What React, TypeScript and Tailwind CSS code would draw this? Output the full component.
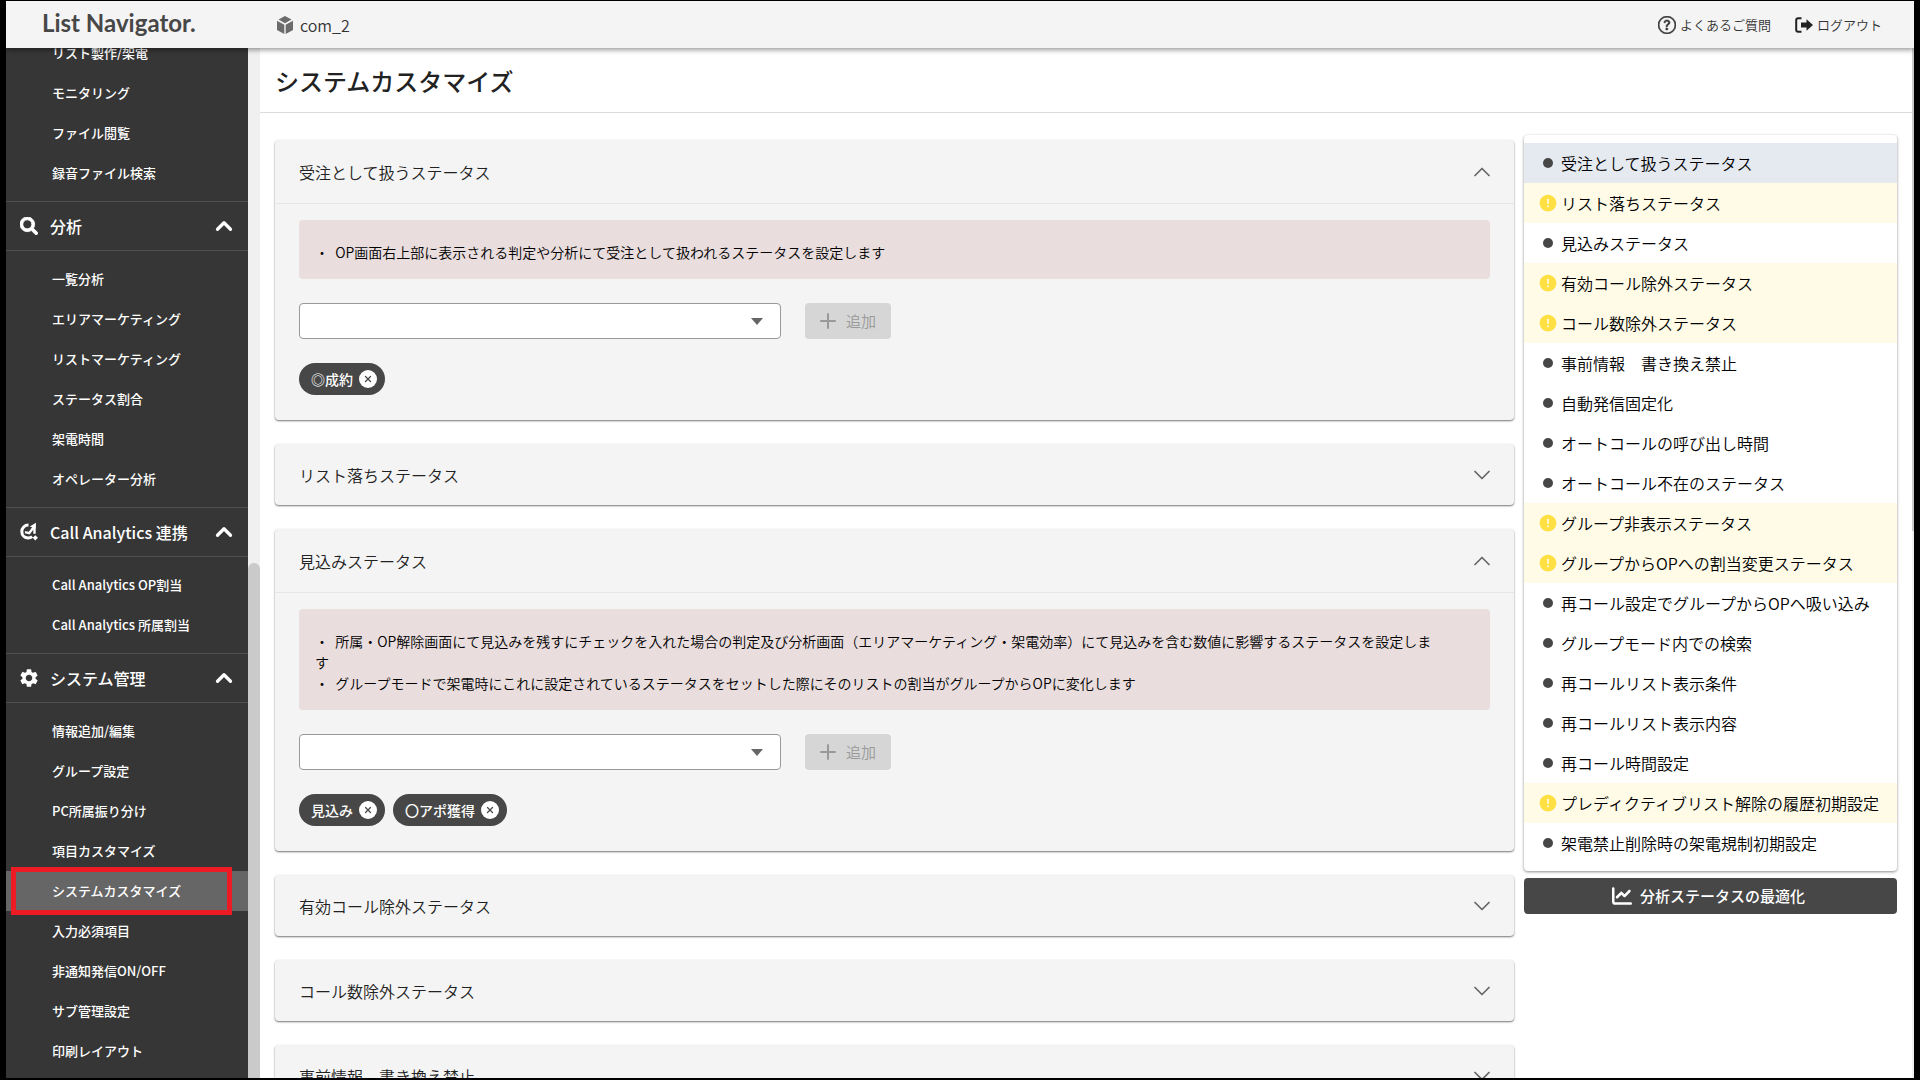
import { useState } from "react";
import clsx from "clsx";
import { FaSearch } from "react-icons/fa";
import { FaChartLine } from "react-icons/fa6";
import { BsQuestionCircle } from "react-icons/bs";
import { MdSettings, MdError } from "react-icons/md";
import { ChevronDown, ChevronUp, Plus, X } from "lucide-react";
import type { ReactNode } from "react";

type MenuSection = {
  readonly title?: string;
  readonly icon?: ReactNode;
  readonly items: readonly string[];
};

type Panel = {
  readonly title: string;
  readonly notes?: readonly ReactNode[];
  readonly tags?: readonly string[];
};

type IndexEntry = {
  readonly label: string;
  readonly warn?: boolean;
};

function CallAnalyticsIcon() {
  return (
    <svg viewBox="0 0 18 18" className="size-[18px]" fill="none" aria-hidden="true">
      <path
        d="M8.500 2C4.500 2 1.800 5 1.800 8.600c0 3.800 2.800 6.400 6.400 6.400 1.600 0 2.900-.4 4-1.300"
        stroke="currentColor"
        strokeWidth="3"
      />
      <path d="M5 9.200l4.200 1L14.500 3v7.800" stroke="currentColor" strokeWidth="2.400" />
      <path d="M9.800 3.600L15.700 0v5.500z" fill="currentColor" />
      <path d="M15.300 12.200l2.600 2.600-2.600 2.600-2.600-2.600z" fill="currentColor" />
    </svg>
  );
}

function CubeIcon() {
  return (
    <svg viewBox="0 0 18 18" className="size-[18px] text-[#6b6b6b]" fill="currentColor" aria-hidden="true">
      <path d="M9 0l6.500 3.500L9 7.200 2.500 3.500z" />
      <path d="M1 4.800l7.300 4V18L1 14z" />
      <path d="M17 4.800l-7.300 4V18L17 14z" />
    </svg>
  );
}

function LogoutIcon() {
  return (
    <svg viewBox="0 0 18 16" className="h-4 w-[18px] text-[#222]" aria-hidden="true">
      <path d="M6.500 1.200H3.200Q1.200 1.200 1.200 3.200v9.600q0 2 2 2h3.300" fill="none" stroke="currentColor" strokeWidth="2" />
      <path d="M6 5.500h5.500V2.300L18 8l-6.500 5.700v-3.200H6z" fill="currentColor" />
    </svg>
  );
}

const MENU: readonly MenuSection[] = [
  { items: ["リスト製作/架電", "モニタリング", "ファイル閲覧", "録音ファイル検索"] },
  {
    title: "分析",
    icon: <FaSearch className="size-[18px]" stroke="currentColor" strokeWidth={24} />,
    items: [
      "一覧分析",
      "エリアマーケティング",
      "リストマーケティング",
      "ステータス割合",
      "架電時間",
      "オペレーター分析",
    ],
  },
  {
    title: "Call Analytics 連携",
    icon: <CallAnalyticsIcon />,
    items: ["Call Analytics OP割当", "Call Analytics 所属割当"],
  },
  {
    title: "システム管理",
    icon: <MdSettings className="-ml-0.5 size-[22px]" />,
    items: [
      "情報追加/編集",
      "グループ設定",
      "PC所属振り分け",
      "項目カスタマイズ",
      "システムカスタマイズ",
      "入力必須項目",
      "非通知発信ON/OFF",
      "サブ管理設定",
      "印刷レイアウト",
    ],
  },
];

const ACTIVE_ITEM = "システムカスタマイズ";

const PANELS: readonly Panel[] = [
  {
    title: "受注として扱うステータス",
    notes: ["OP画面右上部に表示される判定や分析にて受注として扱われるステータスを設定します"],
    tags: ["◎成約"],
  },
  { title: "リスト落ちステータス" },
  {
    title: "見込みステータス",
    notes: [
      <>
        所属・OP解除画面にて見込みを残すにチェックを入れた場合の判定及び分析画面（エリアマーケティング・架電効率）にて見込みを含む数値に影響するステータスを設定しま
        <br />す
      </>,
      "グループモードで架電時にこれに設定されているステータスをセットした際にそのリストの割当がグループからOPに変化します",
    ],
    tags: ["見込み", "〇アポ獲得"],
  },
  { title: "有効コール除外ステータス" },
  { title: "コール数除外ステータス" },
  { title: "事前情報　書き換え禁止" },
];

const INDEX: readonly IndexEntry[] = [
  { label: "受注として扱うステータス" },
  { label: "リスト落ちステータス", warn: true },
  { label: "見込みステータス" },
  { label: "有効コール除外ステータス", warn: true },
  { label: "コール数除外ステータス", warn: true },
  { label: "事前情報　書き換え禁止" },
  { label: "自動発信固定化" },
  { label: "オートコールの呼び出し時間" },
  { label: "オートコール不在のステータス" },
  { label: "グループ非表示ステータス", warn: true },
  { label: "グループからOPへの割当変更ステータス", warn: true },
  { label: "再コール設定でグループからOPへ吸い込み" },
  { label: "グループモード内での検索" },
  { label: "再コールリスト表示条件" },
  { label: "再コールリスト表示内容" },
  { label: "再コール時間設定" },
  { label: "プレディクティブリスト解除の履歴初期設定", warn: true },
  { label: "架電禁止削除時の架電規制初期設定" },
];

function Header() {
  return (
    <header className="relative z-10 flex h-[47px] shrink-0 items-center bg-[#f4f4f4] pr-8 shadow-[0_2px_5px_rgba(0,0,0,0.4)]">
      <a href="#" className="w-[270px] pb-1 pl-9 font-['Lato'] text-2xl leading-7 font-bold text-[#474747]">
        List Navigator.
      </a>
      <div className="flex items-center gap-1.5 text-base font-[350] text-[#333]">
        <CubeIcon />
        com_2
      </div>
      <nav className="ml-auto flex items-center gap-6 text-[13px] font-[350] text-[#333]">
        <a href="#" className="flex items-center gap-1">
          <BsQuestionCircle className="size-[18px]" stroke="currentColor" strokeWidth={0.5} />
          よくあるご質問
        </a>
        <a href="#" className="flex items-center gap-1">
          <LogoutIcon />
          ログアウト
        </a>
      </nav>
    </header>
  );
}

function Sidebar() {
  return (
    <div className="flex w-[254px] shrink-0">
      {/* Scrolled to its end, so the top entries run out under the header */}
      <nav className="flex min-w-0 flex-1 flex-col justify-end overflow-hidden bg-[#363636] text-white">
        {MENU.map((section, idx) => (
          <section key={section.title ?? idx} className="shrink-0 last:-mb-px">
            {section.title ? (
              <button
                type="button"
                aria-expanded="true"
                className="flex h-[50px] w-full items-center border-y border-[#505050] pr-[11px] pl-3.5 text-base font-medium"
              >
                <span className="flex w-[30px] items-center">{section.icon}</span>
                {section.title}
                <ChevronUp className="ml-auto size-[26px]" strokeWidth={3} aria-hidden="true" />
              </button>
            ) : null}
            <ul className="py-2">
              {section.items.map((item) => (
                <li key={item} className={clsx("relative", item === ACTIVE_ITEM && "bg-[#666]")}>
                  <a href="#" className="flex h-10 items-center pl-[46px] text-[13px] font-medium">
                    {item}
                  </a>
                  {item === ACTIVE_ITEM ? (
                    <span className="pointer-events-none absolute -top-1 right-4 -bottom-1 left-[5px] border-5 border-[#ed1c24]" />
                  ) : null}
                </li>
              ))}
            </ul>
          </section>
        ))}
      </nav>
      <div className="flex w-3 flex-col justify-end bg-[#f0f0f0]">
        <div className="h-1/2 rounded-t-full bg-[#cacaca]" />
      </div>
    </div>
  );
}

function StatusPanel({ title, notes, tags }: Panel) {
  const [value, setValue] = useState("");
  const open = notes !== undefined;
  const Chevron = open ? ChevronUp : ChevronDown;

  return (
    <section className="rounded-sm bg-[#f4f4f4] shadow-[0_1px_2px_rgba(0,0,0,0.55)]">
      <button
        type="button"
        aria-expanded={open}
        className={clsx(
          "flex w-full items-center justify-between px-6 text-base font-[350] text-[#222]",
          open ? "h-16 border-b border-[#e6e6e6]" : "h-[61px]",
        )}
      >
        {title}
        <Chevron className="-mr-1.5 size-7 text-[#666]" strokeWidth={1.5} aria-hidden="true" />
      </button>
      {notes ? (
        <div className="flex flex-col gap-6 px-6 pt-4 pb-[25px]">
          <div className="rounded-sm bg-[#e9dddd] px-4 pt-[22px] pb-4 text-sm leading-[21px] font-[350] text-black">
            {notes.map((note, idx) => (
              <p key={idx}>・&nbsp; {note}</p>
            ))}
          </div>
          <div className="flex gap-6">
            <div className="relative w-[482px]">
              <select
                aria-label={title}
                value={value}
                onChange={(e) => setValue(e.target.value)}
                className="h-9 w-full appearance-none rounded-sm border border-[#999] bg-white px-3"
              >
                <option value="" />
              </select>
              <span className="pointer-events-none absolute top-[15px] right-[18px] border-x-6 border-t-7 border-x-transparent border-t-[#666]" />
            </div>
            <button
              type="button"
              disabled
              className="flex h-9 w-[86px] items-center justify-center gap-1.5 rounded-sm bg-[#d6d6d6] pr-1 text-[15px] font-[350] text-[#999]"
            >
              <Plus className="size-6" strokeWidth={2} aria-hidden="true" />
              追加
            </button>
          </div>
          <ul className="flex gap-2">
            {tags?.map((tag) => (
              <li key={tag} className="flex h-8 items-center gap-1.5 rounded-full bg-[#474747] pr-2 pl-3 text-sm font-medium text-white">
                {tag}
                <button
                  type="button"
                  aria-label={`${tag}を削除`}
                  className="flex size-[18px] items-center justify-center rounded-full bg-white text-[#474747]"
                >
                  <X className="size-2.5" strokeWidth={3} aria-hidden="true" />
                </button>
              </li>
            ))}
          </ul>
        </div>
      ) : null}
    </section>
  );
}

function IndexPanel() {
  return (
    <aside className="w-[373px] shrink-0">
      <ul className="rounded-sm bg-white py-2 shadow-[0_1px_3px_rgba(0,0,0,0.45)]">
        {INDEX.map(({ label, warn }, idx) => (
          <li key={label} className={clsx(idx === 0 && "bg-[#e5e9f0]", warn && "bg-[#fffbe6]")}>
            <a href="#" className="flex h-10 items-center gap-[3px] pl-3.5 text-base font-[350] text-black">
              <span className="flex w-5 shrink-0 justify-center">
                {warn ? (
                  <MdError className="size-5 text-[#ffe042]" />
                ) : (
                  <span className="size-2.5 rounded-full bg-[#474747]" />
                )}
              </span>
              {label}
            </a>
          </li>
        ))}
      </ul>
      <button
        type="button"
        className="mt-[7px] flex h-9 w-full items-center justify-center gap-2 rounded-sm bg-[#474747] pr-1 text-[15px] font-medium text-white"
      >
        <FaChartLine className="size-5" />
        分析ステータスの最適化
      </button>
    </aside>
  );
}

export default function App() {
  return (
    <div className="h-screen bg-black pt-px pr-1.5 pb-0.5 pl-1.5 font-['Noto_Sans_CJK_JP',sans-serif]">
      <div className="flex h-full flex-col overflow-hidden bg-white">
        <Header />
        <div className="flex min-h-0 flex-1">
          <Sidebar />
          <main className="flex min-w-0 flex-1 flex-col">
            <h1 className="h-[65px] shrink-0 border-b border-[#dcdcdc] pt-[15px] pl-[15px] text-2xl leading-9 font-medium text-[#222]">
              システムカスタマイズ
            </h1>
            <div className="flex min-h-0 flex-1 items-start gap-2.5 pr-[15px] pl-[15px]">
              <div className="flex min-w-0 flex-1 flex-col gap-6 pt-[27px]">
                {PANELS.map((panel) => (
                  <StatusPanel key={panel.title} {...panel} />
                ))}
              </div>
              <div className="pt-[22px]">
                <IndexPanel />
              </div>
            </div>
          </main>
          <div className="w-0.5 bg-[#f0f0f0]">
            <div className="h-[483px] bg-[#cacaca]" />
          </div>
        </div>
      </div>
    </div>
  );
}
